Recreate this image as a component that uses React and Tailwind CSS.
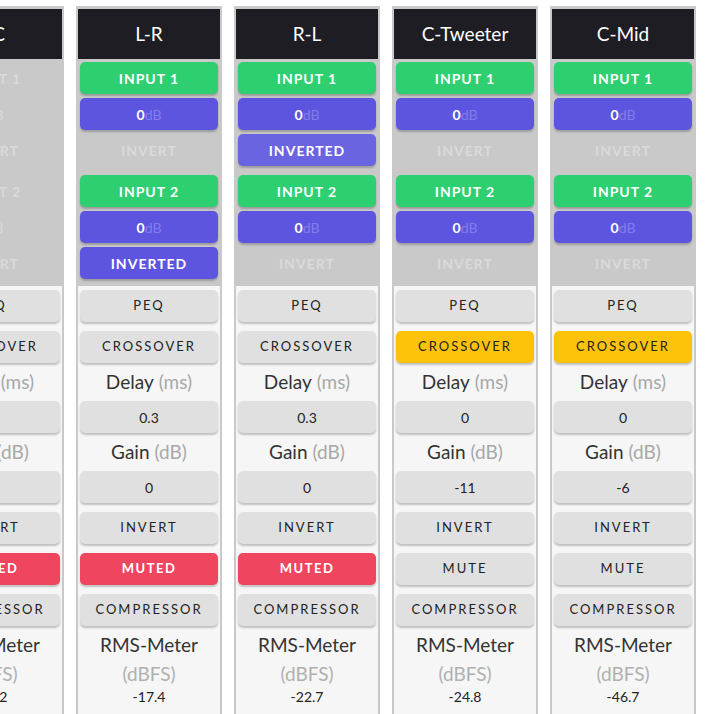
const font = { fontFamily: "Lato, 'Noto Sans', sans-serif" };

const channels = [
  { name: "L-C", in1: false, in2: false, inv1: false, inv2: false, xover: false, delay: "0", gain: "0", muted: true, rms: "-19.2" },
  { name: "L-R", in1: true, in2: true, inv1: false, inv2: true, xover: false, delay: "0.3", gain: "0", muted: true, rms: "-17.4" },
  { name: "R-L", in1: true, in2: true, inv1: true, inv2: false, xover: false, delay: "0.3", gain: "0", muted: true, rms: "-22.7", hoverInv: true },
  { name: "C-Tweeter", in1: true, in2: true, inv1: false, inv2: false, xover: true, delay: "0", gain: "-11", muted: false, rms: "-24.8" },
  { name: "C-Mid", in1: true, in2: true, inv1: false, inv2: false, xover: true, delay: "0", gain: "-6", muted: false, rms: "-46.7" },
];

const btn = "h-8 w-full rounded-[5px] flex items-center justify-center shadow-[0_2px_2px_rgba(0,0,0,0.22)]";
const topText = "text-[14px] font-bold tracking-[1px]";
const lowText = "text-[13px] tracking-[2px] text-[#222]";

function InputGroup({ label, active, inverted, hover }) {
  if (!active) {
    return (
      <div className="flex flex-col gap-1">
        <div className={`h-8 flex items-center justify-center text-[#dadada] ${topText}`}>{label}</div>
        <div className="h-8 flex items-center justify-center text-[14px] text-[#dadada]">
          <span className="font-bold">0</span>
          <span>dB</span>
        </div>
        <div className={`h-8 flex items-center justify-center text-[#dadada] ${topText}`}>INVERT</div>
      </div>
    );
  }
  return (
    <div className="flex flex-col gap-1">
      <div className={`${btn} bg-[#2ecf70] text-white ${topText}`}>{label}</div>
      <div className={`${btn} bg-[#5d55e0] text-[14px]`}>
        <span className="font-bold text-white">0</span>
        <span className="text-[#837de9]">dB</span>
      </div>
      {inverted ? (
        <div className={`${btn} ${hover ? "bg-[#6a64e1]" : "bg-[#5d55e0]"} text-white ${topText}`}>INVERTED</div>
      ) : (
        <div className={`h-8 flex items-center justify-center text-[#dadada] ${topText}`}>INVERT</div>
      )}
    </div>
  );
}

function Label({ title, unit }) {
  return (
    <div className="h-[38px] flex items-center justify-center text-[19px] text-[#333]">
      {title}
      <span className="ml-[5px] text-[#a8a8a8]">{unit}</span>
    </div>
  );
}

function Channel({ ch }) {
  return (
    <div className="w-[146px] shrink-0 bg-[#c9c9c9] pt-[3px] px-[2px]">
      <div className="h-[50px] bg-[#1d1d23] flex items-center justify-center text-white text-[19px]">{ch.name}</div>
      <div className="px-[2px] pt-[3px] pb-[7px] flex flex-col gap-[9px]">
        <InputGroup label="INPUT 1" active={ch.in1} inverted={ch.inv1} hover={ch.hoverInv} />
        <InputGroup label="INPUT 2" active={ch.in2} inverted={ch.inv2} />
      </div>
      <div className="bg-[#f6f6f6] px-[2px] pt-[4px] pb-4 flex flex-col">
        <div className={`${btn} bg-[#e0e0e0] ${lowText}`}>PEQ</div>
        <div className={`${btn} mt-[9px] ${ch.xover ? "bg-[#fdc30a]" : "bg-[#e0e0e0]"} ${lowText}`}>CROSSOVER</div>
        <Label title="Delay" unit="(ms)" />
        <div className={`${btn} bg-[#e0e0e0] text-[14px] text-[#222] tabular-nums`}>{ch.delay}</div>
        <Label title="Gain" unit="(dB)" />
        <div className={`${btn} bg-[#e0e0e0] text-[14px] text-[#222] tabular-nums`}>{ch.gain}</div>
        <div className={`${btn} mt-[9px] bg-[#e0e0e0] ${lowText}`}>INVERT</div>
        {ch.muted ? (
          <div className={`${btn} mt-[9px] bg-[#ef455e] text-white text-[13px] font-bold tracking-[1.5px]`}>MUTED</div>
        ) : (
          <div className={`${btn} mt-[9px] bg-[#e0e0e0] ${lowText}`}>MUTE</div>
        )}
        <div className={`${btn} mt-[9px] bg-[#e0e0e0] ${lowText}`}>COMPRESSOR</div>
        <div className="mt-[7px] leading-[24px] text-center text-[19px] text-[#333]">RMS-Meter</div>
        <div className="mt-[5px] leading-[24px] text-center text-[19px] text-[#b0b0b0]">(dBFS)</div>
        <div className="mt-[3px] leading-[16px] text-center text-[14px] text-[#222] tabular-nums">{ch.rms}</div>
      </div>
    </div>
  );
}

export default function App() {
  return (
    <div className="w-[707px] h-[714px] overflow-hidden bg-white" style={font}>
      <div className="flex gap-3 ml-[-82px] pt-[6px]">
        {channels.map((ch) => (
          <Channel key={ch.name} ch={ch} />
        ))}
      </div>
    </div>
  );
}
